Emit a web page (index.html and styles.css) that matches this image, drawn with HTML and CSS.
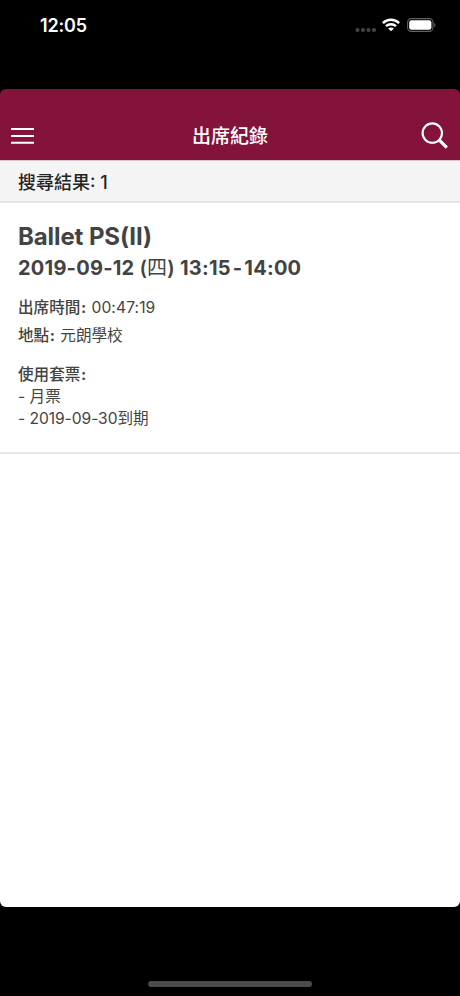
FILE: index.html
```html
<!DOCTYPE html>
<html lang="zh-Hant">
<head>
<meta charset="utf-8">
<title>出席紀錄</title>
<link rel="stylesheet" href="styles.css">
</head>
<body>
<div class="status">
  <span class="clock">12:05</span>
  <div class="indicators">
    <svg class="signal" width="22" height="6" viewBox="0 0 22 6" fill="#454545"><circle cx="2.5" cy="3" r="2.1"/><circle cx="8" cy="3" r="2.1"/><circle cx="13.5" cy="3" r="2.1"/><circle cx="19" cy="3" r="2.1"/></svg>
    <svg class="wifi" width="18" height="14" viewBox="0 0 18 14" fill="none" stroke="#fff" stroke-width="2.5"><path d="M.9 5.1C5.4.7 12.6.7 17.1 5.1M4 8.2c2.8-2.7 7.2-2.7 10 0"/><path d="M9 13.3 6.1 10.5c1.6-1.5 4.2-1.5 5.8 0Z" fill="#fff" stroke="none"/></svg>
    <svg class="battery" width="30" height="14" viewBox="0 0 30 14"><rect x=".6" y=".6" width="25.4" height="12.8" rx="3.8" fill="none" stroke="#626262" stroke-width="1.1"/><rect x="2.2" y="2.2" width="22.2" height="9.6" rx="2.3" fill="#fff"/><path d="M27.2 4.8c1.7.7 1.7 3.7 0 4.4Z" fill="#626262"/></svg>
  </div>
</div>
<main class="screen">
  <header class="navbar">
    <svg class="menu" width="23" height="18" viewBox="0 0 23 18" stroke="#fff" stroke-width="2"><path d="M0 2h23M0 9h23M0 15.7h23"/></svg>
    <h1 class="heading">出席紀錄</h1>
    <svg class="search" width="28" height="28" viewBox="0 0 28 28" fill="none" stroke="#fff"><circle cx="11.3" cy="11.1" r="9.7" stroke-width="2.1"/><path d="m17.8 17.6 8 8" stroke-width="3.2"/></svg>
  </header>
  <div class="summary">搜尋結果: 1</div>
  <article class="record">
    <h2 class="course">Ballet PS(II)</h2>
    <p class="schedule">2019-09-12 <span class="paren">(</span><span class="weekday">四</span><span class="paren">)</span> 13:15<span class="dash">-</span>14:00</p>
    <p class="detail"><b>出席時間<span class="colon">:</span></b> <span class="duration">00:47:19</span></p>
    <p class="detail"><b>地點<span class="colon">:</span></b> 元朗學校</p>
    <div class="ticket">
      <p><b>使用套票<span class="colon">:</span></b></p>
      <p>- 月票</p>
      <p class="expiry">- 2019-09-30到期</p>
    </div>
  </article>
</main>
<footer class="bottom"><div class="home"></div></footer>
</body>
</html>
```
FILE: styles.css
```css
* { box-sizing: border-box; }
body {
  margin: 0;
  height: 996px;
  display: flex;
  flex-direction: column;
  background: #000;
  color: #434343;
  font-family: Inter, "Noto Sans CJK TC", sans-serif;
  overflow: hidden;
}
h1, h2, p { margin: 0; }
.status {
  height: 89px;
  padding: 14px 23px 0 40px;
  display: flex;
  align-items: flex-start;
  justify-content: space-between;
}
.clock { font-size: 18px; line-height: 24px; font-weight: 600; letter-spacing: -.2px; color: #fff; }
.indicators { display: flex; align-items: flex-start; padding-top: 4px; }
.signal { margin: 9px 5px 0 0; }
.wifi { margin-right: 7px; }
.screen {
  height: 818px;
  background: linear-gradient(#84133b 71px, #fff 71px);
  border-radius: 6px;
  overflow: hidden;
}
.navbar {
  height: 71px;
  padding: 20px 11px 0;
  display: grid;
  grid-template-columns: 60px 1fr 60px;
  align-items: center;
}
.heading {
  padding-top: 4px;
  color: #fff;
  font-size: 19px;
  line-height: 28px;
  font-weight: 500;
  text-align: center;
}
.menu { margin-top: 3px; }
.search { justify-self: end; margin-top: 2px; }
.summary {
  height: 43px;
  padding: 1px 18px 0;
  border-top: 1px solid #d8c9cf;
  border-bottom: 2px solid #e5e5e5;
  background: #f5f4f5;
  color: #242424;
  font-size: 18px;
  line-height: 41px;
  font-weight: 500;
}
.record {
  height: 251px;
  padding: 17px 18px 0;
  border-bottom: 2px solid #e8e8e8;
}
.course { font-size: 24px; line-height: 34px; font-weight: 700; letter-spacing: -.1px; }
.schedule {
  font-size: 20px;
  line-height: 29px;
  font-weight: 700;
  letter-spacing: .23px;
  white-space: nowrap;
}
.paren { font-weight: 600; }
.weekday { font-weight: 400; }
.dash { margin: 0 2px; }
.detail { font-size: 15.6px; line-height: 28px; }
.schedule + .detail { margin-top: 11px; }
b { font-weight: 500; }
.colon { margin: 0 1px 0 .5px; font-weight: 700; }
.duration { letter-spacing: .1px; }
.ticket { margin-top: 14px; font-size: 15.6px; line-height: 22px; }
.expiry { letter-spacing: -.05px; }
.bottom { height: 89px; padding-top: 74px; }
.home { width: 164px; height: 6px; margin: 0 auto; border-radius: 3px; background: #4b4b4b; }
```
